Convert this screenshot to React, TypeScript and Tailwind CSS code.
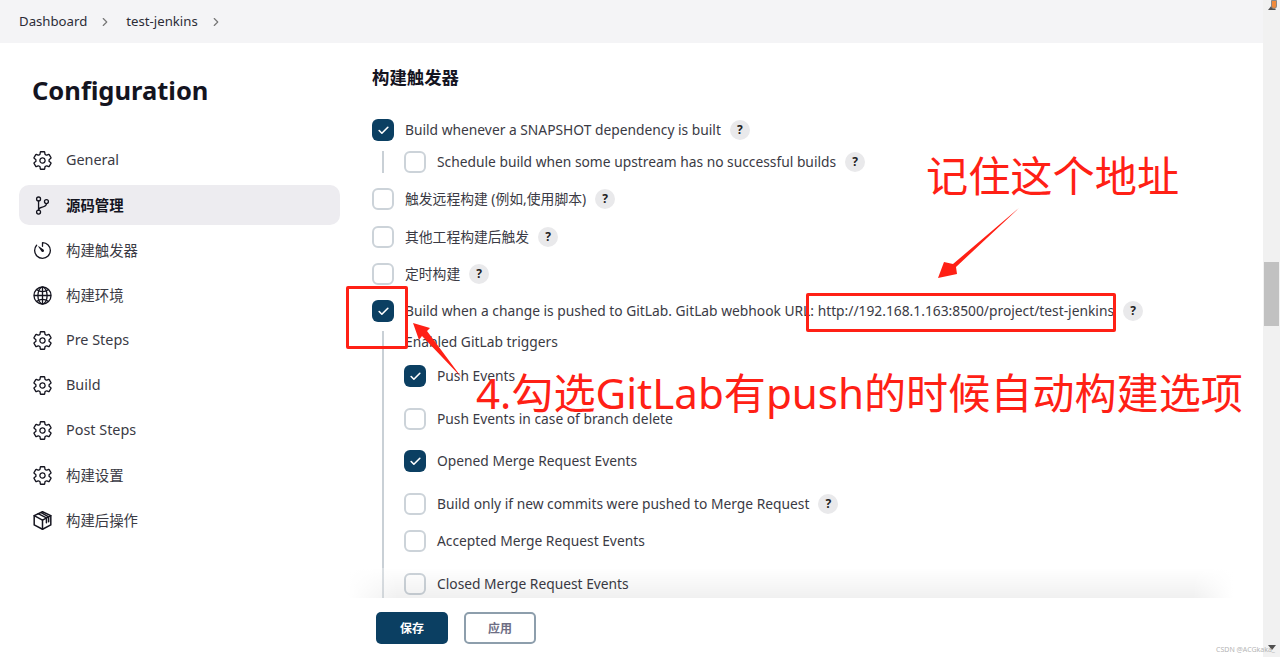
import { Check, ChevronRight } from "lucide-react";
import {
  IoSettingsOutline,
  IoGitBranchOutline,
  IoTimerOutline,
  IoGlobeOutline,
} from "react-icons/io5";
import type { ReactNode } from "react";

function BoxIcon() {
  return (
    <svg width="21" height="21" viewBox="0 0 24 24" fill="none" stroke="currentColor" strokeWidth="1.7" strokeLinejoin="round" strokeLinecap="round">
      <path d="M12 2 21.5 6.5V17L12 22 2.5 17V6.5Z" />
      <path d="M2.5 6.5 12 11.5 21.5 6.5" />
      <path d="M12 11.5V22" />
      <path d="M7 4.2 16.5 9V14.5" />
      <path d="M10.5 3 19 7.8V13.5" />
    </svg>
  );
}

const NAV = [
  { label: "General", latin: true, icon: <IoSettingsOutline size={21} /> },
  { label: "源码管理", icon: <IoGitBranchOutline size={21} />, active: true },
  { label: "构建触发器", icon: <IoTimerOutline size={21} /> },
  { label: "构建环境", icon: <IoGlobeOutline size={21} /> },
  { label: "Pre Steps", latin: true, icon: <IoSettingsOutline size={21} /> },
  { label: "Build", latin: true, icon: <IoSettingsOutline size={21} /> },
  { label: "Post Steps", latin: true, icon: <IoSettingsOutline size={21} /> },
  { label: "构建设置", icon: <IoSettingsOutline size={21} /> },
  { label: "构建后操作", icon: <BoxIcon /> },
];

function Help() {
  return (
    <span className="ml-[9px] flex h-[20px] w-[20px] shrink-0 items-center justify-center rounded-full bg-[#e9e9eb] text-[12px] font-bold text-[#222]">
      ?
    </span>
  );
}

function Row({
  label,
  checked,
  help,
  className,
}: {
  label: ReactNode;
  checked?: boolean;
  help?: boolean;
  className?: string;
}) {
  return (
    <div className={`flex h-[22px] items-center ${className ?? ""}`}>
      <span
        className={`flex h-[22px] w-[22px] shrink-0 items-center justify-center rounded-[6px] ${
          checked ? "bg-[#0b3f62] text-white" : "border-2 border-[#ccd3d9] bg-white"
        }`}
      >
        {checked && <Check size={13} strokeWidth={3} />}
      </span>
      <span className="ml-[11px] whitespace-nowrap text-[13.8px] leading-[22px] text-[#3a3a44]">{label}</span>
      {help && <Help />}
    </div>
  );
}

export default function App() {
  return (
    <div
      className="relative flex h-[657px] w-[1280px] overflow-hidden bg-white text-[#14141f]"
      style={{ fontFamily: '"Noto Sans", "Noto Sans CJK SC", sans-serif' }}
    >
      <div className="flex min-w-0 flex-1 flex-col">
        {/* Breadcrumb */}
        <div className="flex h-[43px] shrink-0 items-center bg-[#f4f4f6] pl-[19px] text-[13.2px] text-[#2c2c36]">
          <span>Dashboard</span>
          <ChevronRight size={14} className="ml-[11px] text-[#777]" />
          <span className="ml-[14px]">test-jenkins</span>
          <ChevronRight size={14} className="ml-[11px] text-[#777]" />
        </div>

        <div className="relative flex min-h-0 flex-1">
          {/* Sidebar */}
          <div className="w-[372px] shrink-0 pl-[19px]">
            <h1 className="mt-[29px] pl-[13px] text-[25.5px] font-bold leading-[37px] text-[#14141f]">
              Configuration
            </h1>
            <div className="mt-[31px] flex w-[321px] flex-col gap-[5px]">
              {NAV.map((item) => (
                <div
                  key={item.label}
                  className={`flex h-[40px] items-center rounded-[10px] pl-[13px] text-[14.4px] ${
                    item.active ? "bg-[#edecf0] font-bold text-[#14141f]" : "text-[#3a3a44]"
                  }`}
                >
                  <span className="flex w-[21px] justify-center text-[#14141f]">{item.icon}</span>
                  <span className={item.latin ? "ml-[13px]" : "ml-[13px] mt-[1px]"}>{item.label}</span>
                </div>
              ))}
            </div>
          </div>

          {/* Form */}
          <div className="min-w-0 flex-1 overflow-hidden">
            <h2 className="mt-[22px] text-[17.4px] font-bold leading-[24px] text-[#14141f]">构建触发器</h2>
            <Row className="mt-[30px]" checked label="Build whenever a SNAPSHOT dependency is built" help />
            <div className="ml-[10px] mt-[10px] border-l-2 border-[#c9d0d6] pl-[20px]">
              <Row label="Schedule build when some upstream has no successful builds" help />
            </div>
            <Row className="mt-[15px]" label="触发远程构建 (例如,使用脚本)" help />
            <Row className="mt-[16px]" label="其他工程构建后触发" help />
            <Row className="mt-[15px]" label="定时构建" help />
            <Row
              className="mt-[15px]"
              checked
              label="Build when a change is pushed to GitLab. GitLab webhook URL: http://192.168.1.163:8500/project/test-jenkins"
              help
            />
            <div className="ml-[10px] mt-[9px] border-l-2 border-[#c9d0d6] pb-[80px] pl-[20px]">
              <div className="flex h-[22px] items-center pl-[1px] text-[13.8px] leading-[22px] text-[#3a3a44]">Enabled GitLab triggers</div>
              <Row className="mt-[12px]" checked label="Push Events" />
              <Row className="mt-[21px]" label="Push Events in case of branch delete" />
              <Row className="mt-[20px]" checked label="Opened Merge Request Events" />
              <Row className="mt-[21px]" label="Build only if new commits were pushed to Merge Request" help />
              <Row className="mt-[15px]" label="Accepted Merge Request Events" />
              <Row className="mt-[21px]" label="Closed Merge Request Events" />
            </div>
          </div>

          {/* Sticky save bar */}
          <div className="absolute bottom-0 left-[348px] right-[30px] h-[59px] bg-white">
            <div className="absolute bottom-full left-0 right-0 h-[30px] bg-gradient-to-t from-[#0000000f] to-transparent">
              <div className="absolute bottom-0 left-0 top-0 w-[50px] bg-gradient-to-r from-white to-transparent" />
              <div className="absolute bottom-0 right-0 top-0 w-[40px] bg-gradient-to-l from-white to-transparent" />
            </div>
            <div className="flex gap-[16px] pl-[28px] pt-[14px]">
              <button className="h-[32px] w-[72px] rounded-[5px] bg-[#0b3f62] pt-[2px] text-[12px] font-bold text-white">保存</button>
              <button className="h-[32px] w-[72px] rounded-[5px] border-2 border-[#8d9eac] bg-white pt-[1px] text-[12px] font-bold text-[#6e6e85]">应用</button>
            </div>
          </div>
        </div>
      </div>

      {/* Scrollbar */}
      <div className="flex w-[17px] shrink-0 flex-col items-center bg-[#f1f1f1]">
        <div className="mt-[5px] h-0 w-0 border-x-[4px] border-b-[5px] border-x-transparent border-b-[#505050]" />
        <div className="mt-[252px] h-[64px] w-[15px] bg-[#c1c1c1]" />
        <div className="mt-[319px] h-0 w-0 border-x-[4px] border-t-[5px] border-x-transparent border-t-[#505050]" />
      </div>

      {/* Annotations drawn over the screenshot */}
      <div className="absolute left-[346px] top-[286px] h-[63px] w-[62px] rounded-[2px] border-[3px] border-[#ff2015]" />
      <div className="absolute left-[806px] top-[293px] h-[39px] w-[310px] rounded-[2px] border-[3px] border-[#ff2015]" />
      <div className="absolute left-[926px] top-[148px] whitespace-nowrap text-[42.2px] leading-[56px] text-[#ff2015]">记住这个地址</div>
      <div className="absolute left-[476px] top-[365px] whitespace-nowrap text-[42.1px] leading-[56px] text-[#ff2015]">4.勾选GitLab有push的时候自动构建选项</div>
      <svg className="pointer-events-none absolute left-0 top-0" width="1280" height="657">
        <polygon points="1019,208 953,264 944,262 938,278 957,274 956,267" fill="#ff2015" />
        <polygon points="462,378 427,331 430,328 413,323 419,340 422,336" fill="#ff2015" />
      </svg>
      <div className="absolute left-[1216px] top-[645px] whitespace-nowrap text-[7px] leading-[9px] text-[#b5b5b5]">CSDN @ACGkaka_</div>
      <div className="absolute left-[1271px] top-0 h-[9px] w-[6px] rounded-b-[3px] border border-[#888] bg-[#f08a3c]" />
    </div>
  );
}
